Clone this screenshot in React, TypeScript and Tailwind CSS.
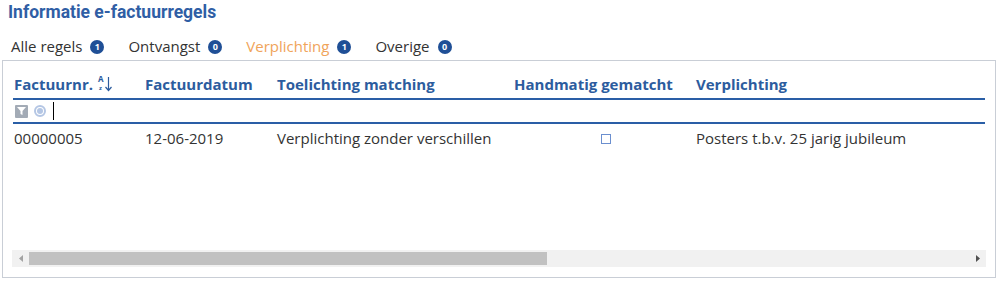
import React from 'react';

const tabs = [
  { label: 'Alle regels', count: 1, active: false },
  { label: 'Ontvangst', count: 0, active: false },
  { label: 'Verplichting', count: 1, active: true },
  { label: 'Overige', count: 0, active: false },
];

const rows = [
  {
    nr: '00000005',
    datum: '12-06-2019',
    toelichting: 'Verplichting zonder verschillen',
    handmatig: false,
    verplichting: 'Posters t.b.v. 25 jarig jubileum',
  },
];

const cols = 'grid grid-cols-[131px_132px_237px_182px_1fr]';

function Badge({ n }: { n: number }) {
  return (
    <span className="inline-flex items-center justify-center w-[14px] h-[14px] rounded-full bg-[#1f4f96] text-white text-[9px] font-bold leading-none">
      {n}
    </span>
  );
}

export default function App() {
  return (
    <div className="w-[1000px] h-[281px] bg-white font-['Open_Sans',sans-serif] overflow-hidden">
      {/* Title */}
      <div className="pl-[8px] h-[24px] font-['Roboto',sans-serif] text-[17.5px] font-bold text-[#2f5ea5] leading-[24px]">
        Informatie e-factuurregels
      </div>

      {/* Tabs */}
      <div className="flex items-center h-[36px] pt-[9px] pl-[11px] text-[15px]">
        {tabs.map((t) => (
          <div key={t.label} className="flex items-center gap-[8px] mr-[24px]">
            <span className={t.active ? 'text-[#f0a45a]' : 'text-[#333333]'}>{t.label}</span>
            <Badge n={t.count} />
          </div>
        ))}
      </div>

      {/* Grid box */}
      <div className="ml-[2px] w-[994px] h-[218px] border border-[#c9ced6] flex flex-col">
        <div className="px-[10px] flex-1">
          {/* Header */}
          <div className={`${cols} h-[39px] items-center text-[15px] font-bold text-[#2c5c9e] border-b-2 border-[#2a5ea6] pt-[9px]`}>
            <div className="pl-[1px] flex items-center">
              Factuurnr.
              <span className="ml-[5px] relative w-[14px] h-[16px] inline-block">
                <span className="absolute left-0 top-[-1px] text-[8px] font-bold leading-none">A</span>
                <span className="absolute left-[1px] top-[9px] text-[6px] font-bold leading-none">z</span>
                <svg className="absolute left-[7px] top-[1px]" width="7" height="15" viewBox="0 0 7 15">
                  <path d="M3.5 0 V13 M0.5 10 L3.5 13.5 L6.5 10" stroke="#2c5c9e" strokeWidth="1.2" fill="none" />
                </svg>
              </span>
            </div>
            <div className="pl-[1px]">Factuurdatum</div>
            <div className="pl-[1px]">Toelichting matching</div>
            <div className="pl-[1px]">Handmatig gematcht</div>
            <div className="pl-[1px]">Verplichting</div>
          </div>

          {/* Filter row */}
          <div className="h-[24px] flex items-center gap-[6px] pl-[2px] border-b-2 border-[#2a5ea6]">
            <span className="w-[13px] h-[13px] bg-[#a3abb6] rounded-[1px] flex items-center justify-center">
              <svg width="9" height="8" viewBox="0 0 9 8">
                <path d="M0 0 H9 L5.5 4 V8 L3.5 7 V4 Z" fill="#ffffff" />
              </svg>
            </span>
            <span className="w-[12px] h-[12px] rounded-full border-2 border-[#b4c6e4] flex items-center justify-center">
              <span className="w-[6px] h-[6px] rounded-full bg-[#b4c6e4]" />
            </span>
            <span className="w-px h-[18px] bg-black ml-[1px]" />
          </div>

          {/* Rows */}
          {rows.map((r) => (
            <div key={r.nr} className={`${cols} h-[29px] items-center text-[15px] text-[#333333]`}>
              <div className="pl-[1px]">{r.nr}</div>
              <div className="pl-[1px]">{r.datum}</div>
              <div className="pl-[1px]">{r.toelichting}</div>
              <div className="flex justify-center pl-[4px]">
                <span className="w-[10px] h-[10px] border border-[#6b8fcf] bg-white" />
              </div>
              <div className="pl-[1px]">{r.verplichting}</div>
            </div>
          ))}
        </div>

        {/* Horizontal scrollbar */}
        <div className="mx-[9px] mb-[10px] h-[17px] bg-[#f1f1f1] flex items-center">
          <div className="w-[17px] h-full flex items-center justify-center">
            <svg width="4" height="7" viewBox="0 0 4 7">
              <path d="M4 0 V7 L0 3.5 Z" fill="#a3a3a3" />
            </svg>
          </div>
          <div className="w-[518px] h-[13px] bg-[#c1c1c1]" />
          <div className="flex-1" />
          <div className="w-[17px] h-full flex items-center justify-center">
            <svg width="4" height="7" viewBox="0 0 4 7">
              <path d="M0 0 V7 L4 3.5 Z" fill="#505050" />
            </svg>
          </div>
        </div>
      </div>
    </div>
  );
}
